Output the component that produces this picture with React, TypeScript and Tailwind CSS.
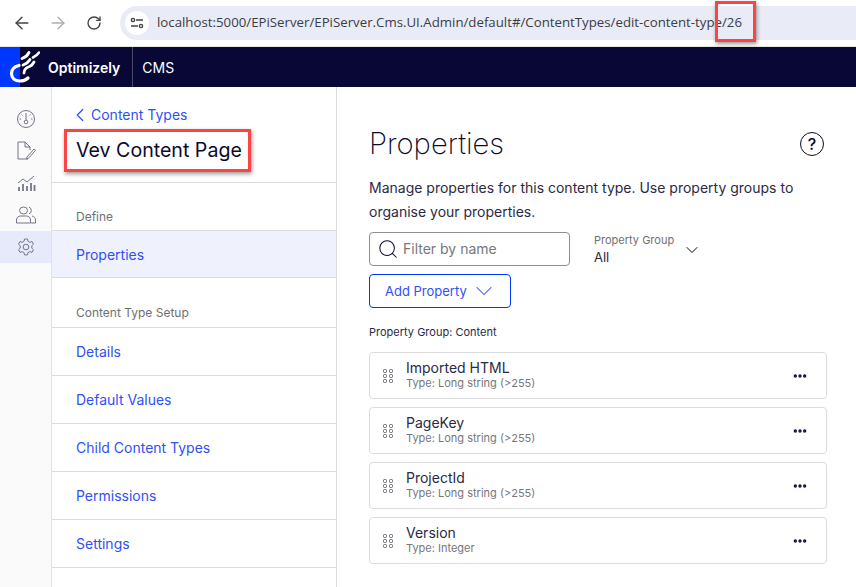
import React from 'react';
import { ArrowLeft, ArrowRight, RotateCw, ChevronLeft, ChevronDown, Search, Ellipsis } from 'lucide-react';

const steps = ['Details', 'Default Values', 'Child Content Types', 'Permissions', 'Settings'];

const properties = [
  { name: 'Imported HTML', type: 'Type: Long string (>255)' },
  { name: 'PageKey', type: 'Type: Long string (>255)' },
  { name: 'ProjectId', type: 'Type: Long string (>255)' },
  { name: 'Version', type: 'Type: Integer' },
];

const Logo = () => (
  <svg width="40" height="40" viewBox="0 0 40 40" fill="none" stroke="#fff" strokeLinecap="round">
    <path d="M19 18.500C14.500 19.500 11.500 22.500 11.500 26.500C11.500 31 15 34 20 34C23 34 26 33 28 31" strokeWidth="3.200" />
    <path d="M22 11.500C25 10.500 27.500 8.500 29 5.500" strokeWidth="2.800" />
    <path d="M33 10.500C35.500 9.500 37.500 8 39 5.500" strokeWidth="2.600" />
    <path d="M23 18C26 17 28.500 15 30 12.500" strokeWidth="2.800" />
    <path d="M24 26C24 23 26.500 20.500 29.500 19.500C31.500 18.500 33 17 34 15" strokeWidth="2.800" />
  </svg>
);

const RailIcon = ({ children }: { children: React.ReactNode }) => (
  <svg width="20" height="20" viewBox="0 0 20 20" fill="none" stroke="#75758a" strokeWidth="1">
    {children}
  </svg>
);

const Grip = () => (
  <svg width="11" height="14" viewBox="0 0 11 14" fill="none" stroke="#5f5f68" strokeWidth="1" className="shrink-0">
    {[0.500, 5.500, 10.500].map((y) => (
      <React.Fragment key={y}>
        <rect x="0.500" y={y} width="3" height="3" rx="1" />
        <rect x="6.500" y={y} width="3" height="3" rx="1" />
      </React.Fragment>
    ))}
  </svg>
);

export default function App() {
  return (
    <div className="relative h-[587px] w-[856px] overflow-hidden bg-white font-['Inter',sans-serif] text-[#0a0a2e]">
      {/* browser toolbar */}
      <div className="flex h-[47px] items-center border-b border-[#e4e4e0] bg-white pb-[1px] pl-[12px]">
        <ArrowLeft size={20} strokeWidth={1.700} className="text-[#444]" />
        <ArrowRight size={20} strokeWidth={1.700} className="ml-[16px] text-[#b0b0b0]" />
        <RotateCw size={16} strokeWidth={2} className="ml-[18px] text-[#444]" />
        <div className="ml-[18px] flex h-[34px] flex-1 items-center rounded-l-full bg-[#e9ecf6] pl-[5px]">
          <div className="flex h-[24px] w-[24px] items-center justify-center rounded-full bg-white">
            <svg width="14" height="12" viewBox="0 0 14 12" fill="none" stroke="#444" strokeWidth="1.400">
              <circle cx="3" cy="3" r="1.600" />
              <path d="M6 3h7M1 9h7" />
              <circle cx="11" cy="9" r="1.600" />
            </svg>
          </div>
          <span className="ml-[8px] whitespace-nowrap font-['Open_Sans',sans-serif] text-[13.25px] text-[#3c3c44]">
            localhost:5000/EPiServer/EPiServer.Cms.UI.Admin/default#/ContentTypes/edit-content-type/26
          </span>
        </div>
      </div>

      {/* product bar */}
      <div className="flex h-[40px] items-center bg-[#080736] text-white">
        <div className="relative h-[40px] w-[20px] shrink-0 bg-[#0037ff]">
          <div className="absolute left-0 top-0">
            <Logo />
          </div>
        </div>
        <span className="ml-[28px] text-[14px] font-semibold">Optimizely</span>
        <div className="ml-[12px] h-[40px] w-px bg-[#4a4a6a]" />
        <span className="ml-[9px] text-[14px]">CMS</span>
      </div>

      <div className="flex h-[500px]">
        {/* icon rail */}
        <div className="flex w-[52px] shrink-0 flex-col items-center border-r border-[#e2e2e2] bg-[#fafafa] pt-[16px]">
          <div className="flex h-[32px] w-full items-center justify-center">
            <RailIcon>
              <circle cx="10" cy="10" r="8.500" />
              <path d="M10 4v7M5.500 5.500l1 1M14.500 5.500l-1 1M3.500 10h1.500M15 10h1.500" />
              <circle cx="10" cy="13" r="1.800" />
            </RailIcon>
          </div>
          <div className="flex h-[32px] w-full items-center justify-center">
            <RailIcon>
              <path d="M12 18H2V1h7l5 5v3M9 1v5h5" />
              <path d="M11 16l7-8 1.500 1.300-7 8-2 .5z" />
            </RailIcon>
          </div>
          <div className="flex h-[32px] w-full items-center justify-center">
            <RailIcon>
              <path d="M2 10l5-4 4 3 7-6" />
              <path d="M3 18v-4M7 18v-7M11 18v-5M15 18v-8M18.500 18v-6" strokeWidth="1.800" />
            </RailIcon>
          </div>
          <div className="flex h-[32px] w-full items-center justify-center">
            <RailIcon>
              <ellipse cx="7.500" cy="5.500" rx="4" ry="3.500" />
              <path d="M0.500 18v-3c0-2.500 2-4 4-4h6c2 0 4 1.500 4 4v3z" />
              <path d="M13 2.200a3.500 3.500 0 0 1 0 6.600M16 11c2 .5 3.500 2 3.500 4v3H15" />
            </RailIcon>
          </div>
          <div className="flex h-[32px] w-full items-center justify-center bg-[#e6eafb]">
            <RailIcon>
              <circle cx="10" cy="10" r="2.800" />
              <path d="M8.500 2h3l.5 2.300 1.800 1 2.200-.8 1.500 2.600-1.700 1.600v2.500l1.700 1.600-1.500 2.600-2.200-.8-1.800 1-.5 2.300h-3l-.5-2.300-1.800-1-2.200.8-1.500-2.600 1.700-1.600V8.700L2.500 7.100 4 4.500l2.200.8 1.800-1z" />
            </RailIcon>
          </div>
        </div>

        {/* settings column */}
        <div className="flex w-[285px] shrink-0 flex-col border-r border-[#dcdcdc]">
          <div className="h-[96px] border-b border-[#dcdcdc] pl-[24px] pt-[19px]">
            <div className="flex h-[18px] items-center text-[14px] leading-[18px] text-[#2f50f5]">
              <ChevronLeft size={22} strokeWidth={1.300} className="-ml-[7px]" />
              Content Types
            </div>
            <div className="mt-[12px] text-[19.6px] leading-[28px]">Vev Content Page</div>
          </div>
          <div className="h-[47px] pl-[24px] pt-[26px] text-[12px] leading-[16px] text-[#6f6f76]">Define</div>
          <div className="flex h-[48px] shrink-0 items-center border-y border-[#dcdcdc] bg-[#eff1fd] pl-[24px] text-[14px] text-[#2f50f5]">
            Properties
          </div>
          <div className="h-[49px] shrink-0 pl-[24px] pt-[27px] text-[12px] leading-[16px] text-[#6f6f76]">Content Type Setup</div>
          {steps.map((s) => (
            <div key={s} className="flex h-[48px] shrink-0 items-center border-t border-[#dcdcdc] pl-[24px] text-[14px] text-[#2f50f5]">
              {s}
            </div>
          ))}
          <div className="border-t border-[#dcdcdc]" />
        </div>

        {/* main */}
        <div className="min-w-0 flex-1 pl-[32px] pr-[29px]">
          <div className="flex items-center justify-between pt-[39px]">
            <h1 className="text-[29.2px] font-extralight leading-[36px]">Properties</h1>
            <div className="mr-[3px] flex h-[24px] w-[24px] items-center justify-center rounded-full border-[1.500px] border-[#0a0a2e] text-[16px] font-medium">
              ?
            </div>
          </div>
          <p className="mt-[14px] text-[14px] leading-[24px] text-[#2a2a45]">
            Manage properties for this content type. Use property groups to organise your properties.
          </p>
          <div className="mt-[8px] flex items-start">
            <div className="flex h-[34px] w-[201px] items-center rounded-[4px] border border-[#8f8f8f] pl-[7px]">
              <Search size={22} strokeWidth={1.100} />
              <span className="ml-[4px] text-[14px] leading-[20px] text-[#77777c]">Filter by name</span>
            </div>
            <div className="ml-[24px] mt-[1px]">
              <div className="text-[11px] leading-[14px] text-[#6f6f76]">Property Group</div>
              <div className="mt-[2px] text-[13px] leading-[16px] text-[#2a2a45]">All</div>
            </div>
            <ChevronDown size={20} strokeWidth={1.200} className="ml-[8px] mt-[8px]" />
          </div>
          <div className="mt-[8px] flex h-[34px] w-[142px] items-center rounded-[4px] border border-[#0037ff] pl-[15px] text-[13px] text-[#2f50f5]">
            <span className="pt-[1px]">Add Property</span>
            <ChevronDown size={28} strokeWidth={0.900} className="ml-[3px]" />
          </div>
          <div className="mt-[17px] text-[11px] leading-[14px] text-[#2a2a45]">Property Group: Content</div>
          <div className="mt-[13px] flex flex-col gap-[8px]">
            {properties.map((p) => (
              <div key={p.name} className="flex h-[47px] items-center rounded-[4px] border border-[#dcdcdc] pl-[13px] pr-[18px]">
                <Grip />
                <div className="ml-[12px] flex-1 pb-[2px]">
                  <div className="text-[14px] leading-[16px] text-[#2a2a45]">{p.name}</div>
                  <div className="text-[11px] leading-[14px] text-[#77777c]">{p.type}</div>
                </div>
                <Ellipsis size={16} strokeWidth={3} />
              </div>
            ))}
          </div>
        </div>
      </div>

      {/* red annotation boxes */}
      <div className="absolute left-[715px] top-[1px] h-[41px] w-[41px] border-[3px] border-[#fb4545] shadow-[1px_2px_4px_rgba(0,0,0,0.4)]" />
      <div className="absolute left-[64px] top-[129px] h-[43px] w-[187px] border-[3px] border-[#fb4545] shadow-[1px_2px_4px_rgba(0,0,0,0.4)]" />
    </div>
  );
}
